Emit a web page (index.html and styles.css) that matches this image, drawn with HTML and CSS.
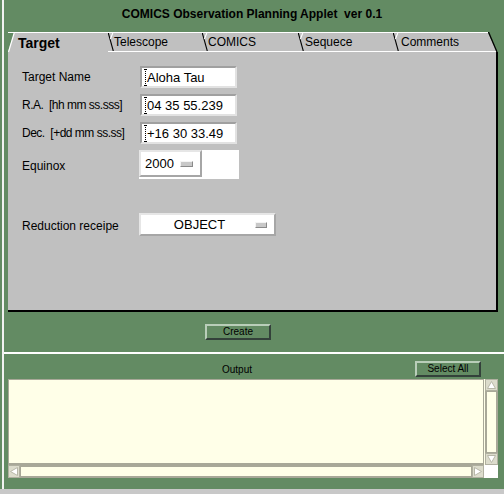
FILE: index.html
```html
<!DOCTYPE html>
<html>
<head>
<meta charset="utf-8">
<link rel="stylesheet" href="styles.css">
</head>
<body>
<div class="app">
  <div class="frame">
    <div class="top">
      <div class="title">COMICS Observation Planning Applet&nbsp; ver 0.1</div>
      <div class="tabs">
        <div class="tab sel w100">
          <svg class="edge" width="7" height="19" viewBox="0 0 7 19"><polygon points="0,0 6,0 0,19" fill="#638b63"/><line x1="0.5" y1="19" x2="6.2" y2="0" stroke="#fff" stroke-width="1.2"/></svg>
          <span class="tlabel">Target</span>
        </div>
        <div class="tab w94">
          <svg class="edge" width="6" height="18" viewBox="0 0 6 18"><line x1="0.3" y1="0" x2="5.3" y2="18" stroke="#000" stroke-width="1.1"/><line x1="4.8" y1="0" x2="2.4" y2="6" stroke="#fff" stroke-width="1.1"/></svg>
          <span class="tlabel">Telescope</span>
        </div>
        <div class="tab w96">
          <svg class="edge" width="6" height="18" viewBox="0 0 6 18"><line x1="0.3" y1="0" x2="5.3" y2="18" stroke="#000" stroke-width="1.1"/><line x1="4.8" y1="0" x2="2.4" y2="6" stroke="#fff" stroke-width="1.1"/></svg>
          <span class="tlabel">COMICS</span>
        </div>
        <div class="tab w95">
          <svg class="edge" width="6" height="18" viewBox="0 0 6 18"><line x1="0.3" y1="0" x2="5.3" y2="18" stroke="#000" stroke-width="1.1"/><line x1="4.8" y1="0" x2="2.4" y2="6" stroke="#fff" stroke-width="1.1"/></svg>
          <span class="tlabel l7">Sequece</span>
        </div>
        <div class="tab w95">
          <svg class="edge" width="6" height="18" viewBox="0 0 6 18"><line x1="0.3" y1="0" x2="5.3" y2="18" stroke="#000" stroke-width="1.1"/><line x1="4.8" y1="0" x2="2.4" y2="6" stroke="#fff" stroke-width="1.1"/></svg>
          <span class="tlabel l8">Comments</span>
        </div>
        <svg class="tabend" width="10" height="20" viewBox="0 0 10 20"><polygon points="0,0 10,0 10,20 9,20" fill="#638b63"/><polygon points="0,1 9,20 0,20" fill="#c0c0c0"/><line x1="0" y1="19.5" x2="9" y2="19.5" stroke="#fff" stroke-width="1"/><line x1="0.5" y1="0" x2="9" y2="20" stroke="#000" stroke-width="1.3"/></svg>
      </div>
      <div class="panel">
        <div class="row">
          <span class="label">Target Name</span>
          <div class="field"><svg class="caret" width="3" height="17" viewBox="0 0 3 17"><line x1="1.5" y1="0" x2="1.5" y2="17" stroke="#000" stroke-dasharray="1 1"/><line x1="0" y1="0.5" x2="3" y2="0.5" stroke="#000" stroke-dasharray="1 1"/><line x1="0" y1="16.5" x2="3" y2="16.5" stroke="#000" stroke-dasharray="1 1"/></svg><span>Aloha Tau</span></div>
        </div>
        <div class="row">
          <span class="label tight">R.A.&nbsp; [hh mm ss.sss]</span>
          <div class="field"><svg class="caret" width="3" height="17" viewBox="0 0 3 17"><line x1="1.5" y1="0" x2="1.5" y2="17" stroke="#000" stroke-dasharray="1 1"/><line x1="0" y1="0.5" x2="3" y2="0.5" stroke="#000" stroke-dasharray="1 1"/><line x1="0" y1="16.5" x2="3" y2="16.5" stroke="#000" stroke-dasharray="1 1"/></svg><span>04 35 55.239</span></div>
        </div>
        <div class="row">
          <span class="label tight">Dec.&nbsp; [+dd mm ss.ss]</span>
          <div class="field"><svg class="caret" width="3" height="17" viewBox="0 0 3 17"><line x1="1.5" y1="0" x2="1.5" y2="17" stroke="#000" stroke-dasharray="1 1"/><line x1="0" y1="0.5" x2="3" y2="0.5" stroke="#000" stroke-dasharray="1 1"/><line x1="0" y1="16.5" x2="3" y2="16.5" stroke="#000" stroke-dasharray="1 1"/></svg><span>+16 30 33.49</span></div>
        </div>
        <div class="row eq">
          <span class="label">Equinox</span>
          <div class="eqbox">
            <div class="choice small"><span>2000</span><span class="ind"></span></div>
          </div>
        </div>
        <div class="row red">
          <span class="label">Reduction receipe</span>
          <div class="choice wide"><span class="ctext">OBJECT</span><span class="ind"></span></div>
        </div>
      </div>
      <div class="actions"><button class="btn">Create</button></div>
    </div>
    <div class="sep"></div>
    <div class="bottom">
      <div class="outhead">
        <span class="outlabel">Output</span>
        <button class="btn selall">Select All</button>
      </div>
      <div class="textarea">
        <div class="ta-main"></div>
        <div class="vscroll">
          <div class="arrow v"><svg width="9" height="8" viewBox="0 0 9 8"><polygon points="4.5,0.5 8.5,7.5 0.5,7.5" fill="#fff" stroke="#b8b8a8" stroke-width="1"/></svg></div>
          <div class="track v"></div>
          <div class="arrow v"><svg width="9" height="8" viewBox="0 0 9 8"><polygon points="0.5,0.5 8.5,0.5 4.5,7.5" fill="#fff" stroke="#b8b8a8" stroke-width="1"/></svg></div>
        </div>
        <div class="hscroll">
          <div class="arrow h"><svg width="8" height="9" viewBox="0 0 8 9"><polygon points="0.5,4.5 7.5,0.5 7.5,8.5" fill="#fff" stroke="#b8b8a8" stroke-width="1"/></svg></div>
          <div class="track h"></div>
          <div class="arrow h"><svg width="8" height="9" viewBox="0 0 8 9"><polygon points="0.5,0.5 7.5,4.5 0.5,8.5" fill="#fff" stroke="#b8b8a8" stroke-width="1"/></svg></div>
        </div>
        <div class="corner"></div>
      </div>
    </div>
  </div>
  <div class="foot"></div>
</div>
</body>
</html>
```

FILE: styles.css
```css
html, body {
  margin: 0;
  padding: 0;
}
body {
  background: #638b63;
  font-family: "Liberation Sans", Arial, sans-serif;
  color: #000;
}
.app {
  width: 504px;
  height: 494px;
  display: flex;
  flex-direction: column;
  overflow: hidden;
}
.frame {
  height: 489px;
  margin-left: 2px;
  border-left: 2px solid #f2f2f2;
  display: flex;
  flex-direction: column;
}
.top {
  height: 352px;
  padding-left: 4px;
  display: flex;
  flex-direction: column;
}
.title {
  height: 32px;
  line-height: 28px;
  margin-left: -8px;
  text-align: center;
  font-weight: bold;
  font-size: 12px;
  white-space: nowrap;
}
.tabs {
  display: flex;
  width: 490px;
  height: 20px;
}
.tab {
  box-sizing: border-box;
  height: 20px;
  background: #c0c0c0;
  border-top: 1px solid #fff;
  border-bottom: 1px solid #fff;
  display: flex;
  align-items: center;
  font-size: 12px;
  white-space: nowrap;
  overflow: hidden;
}
.tab.sel {
  border-bottom: none;
  font-weight: bold;
  font-size: 14px;
}
.w100 { width: 100px; }
.w94 { width: 94px; }
.w95 { width: 95px; }
.w96 { width: 96px; }
.edge {
  flex: none;
  align-self: flex-start;
}
.tab.sel .tlabel {
  margin-left: 3px;
}
.tlabel.l7 { margin-left: 1px; }
.tlabel.l8 { margin-left: 2px; }
.tabend {
  flex: none;
  display: block;
}
.panel {
  box-sizing: border-box;
  width: 490px;
  height: 260px;
  background: #c0c0c0;
  border-right: 2px solid #000;
  border-bottom: 2px solid #000;
  padding: 14px 0 0 14px;
  display: flex;
  flex-direction: column;
}
.row {
  display: flex;
  align-items: center;
  height: 22px;
  margin-bottom: 6px;
}
.row.eq {
  height: 29px;
  margin-bottom: 34px;
}
.row.red {
  height: 23px;
}
.label {
  width: 118px;
  flex: none;
  font-size: 12px;
  white-space: nowrap;
}
.label.tight {
  letter-spacing: -0.5px;
}
.row.red .label {
  padding-top: 3px;
}
.row.eq .label {
  padding-top: 3px;
}
.field {
  box-sizing: border-box;
  width: 97px;
  height: 22px;
  background: #fff;
  border: 2px solid;
  border-color: #a0a0a0 #e2e2e2 #e2e2e2 #a0a0a0;
  display: flex;
  align-items: center;
  padding-left: 2px;
  font-size: 13px;
  white-space: nowrap;
}
.caret {
  flex: none;
  margin-right: 0;
}
.eqbox {
  width: 100px;
  height: 29px;
  background: #fff;
  margin-left: -1px;
}
.choice {
  box-sizing: border-box;
  background: #fff;
  border: 2px solid;
  border-color: #e6e6e6 #a6a6a6 #a6a6a6 #e6e6e6;
  display: flex;
  align-items: center;
  font-size: 13px;
  white-space: nowrap;
}
.choice.small {
  width: 63px;
  height: 27px;
  padding-left: 4px;
}
.choice.small .ind {
  margin-left: 6px;
}
.choice.wide {
  width: 137px;
  height: 23px;
  margin-left: -1px;
}
.ctext {
  flex: 1;
  text-align: center;
  padding-left: 3px;
}
.choice.wide .ind {
  margin-right: 7px;
  width: 12px;
}
.ind {
  box-sizing: border-box;
  display: block;
  width: 13px;
  height: 6px;
  background: #c8c8c8;
  border: 1px solid;
  border-color: #f4f4f4 #8a8a8a #8a8a8a #f4f4f4;
}
.actions {
  height: 40px;
  box-sizing: border-box;
  padding: 12px 0 0 197px;
}
.btn {
  box-sizing: border-box;
  display: block;
  width: 66px;
  height: 16px;
  padding: 0;
  margin: 0;
  background: #638b63;
  border: 2px solid;
  border-color: #b9ceb9 #33413a #33413a #b9ceb9;
  font-family: "Liberation Sans", Arial, sans-serif;
  font-size: 10px;
  line-height: 12px;
  color: #000;
  text-align: center;
}
.sep {
  height: 2px;
  background: #fff;
}
.bottom {
  flex: 1;
  padding-left: 4px;
}
.outhead {
  display: flex;
  align-items: center;
  height: 16px;
  margin-top: 7px;
}
.outlabel {
  margin-left: 214px;
  font-size: 10px;
}
.selall {
  margin-left: auto;
  margin-right: 23px;
}
.textarea {
  margin-top: 2px;
  width: 490px;
  height: 99px;
  display: grid;
  grid-template-columns: 476px 14px;
  grid-template-rows: 86px 13px;
}
.ta-main {
  box-sizing: border-box;
  background: #ffffe8;
  border: 1px solid #a8a898;
  border-bottom-width: 2px;
}
.vscroll {
  display: flex;
  flex-direction: column;
  background: #ffffe8;
  box-sizing: border-box;
  padding-left: 1px;
}
.hscroll {
  display: flex;
  background: #ffffe8;
}
.arrow {
  box-sizing: border-box;
  background: #dcdccc;
  border: 1px solid #b0b0a0;
  display: flex;
  align-items: center;
  justify-content: center;
}
.arrow.v {
  height: 12px;
}
.arrow.h {
  width: 12px;
}
.track {
  flex: 1;
  box-sizing: border-box;
  border: 1px solid #a8a898;
  background: #ffffe8;
}
.track.v {
  border-width: 1px 2px;
}
.track.h {
  border-width: 2px 1px;
}
.corner {
  background: #fff;
}
.foot {
  height: 5px;
  background: #c8c8c8;
}
```
